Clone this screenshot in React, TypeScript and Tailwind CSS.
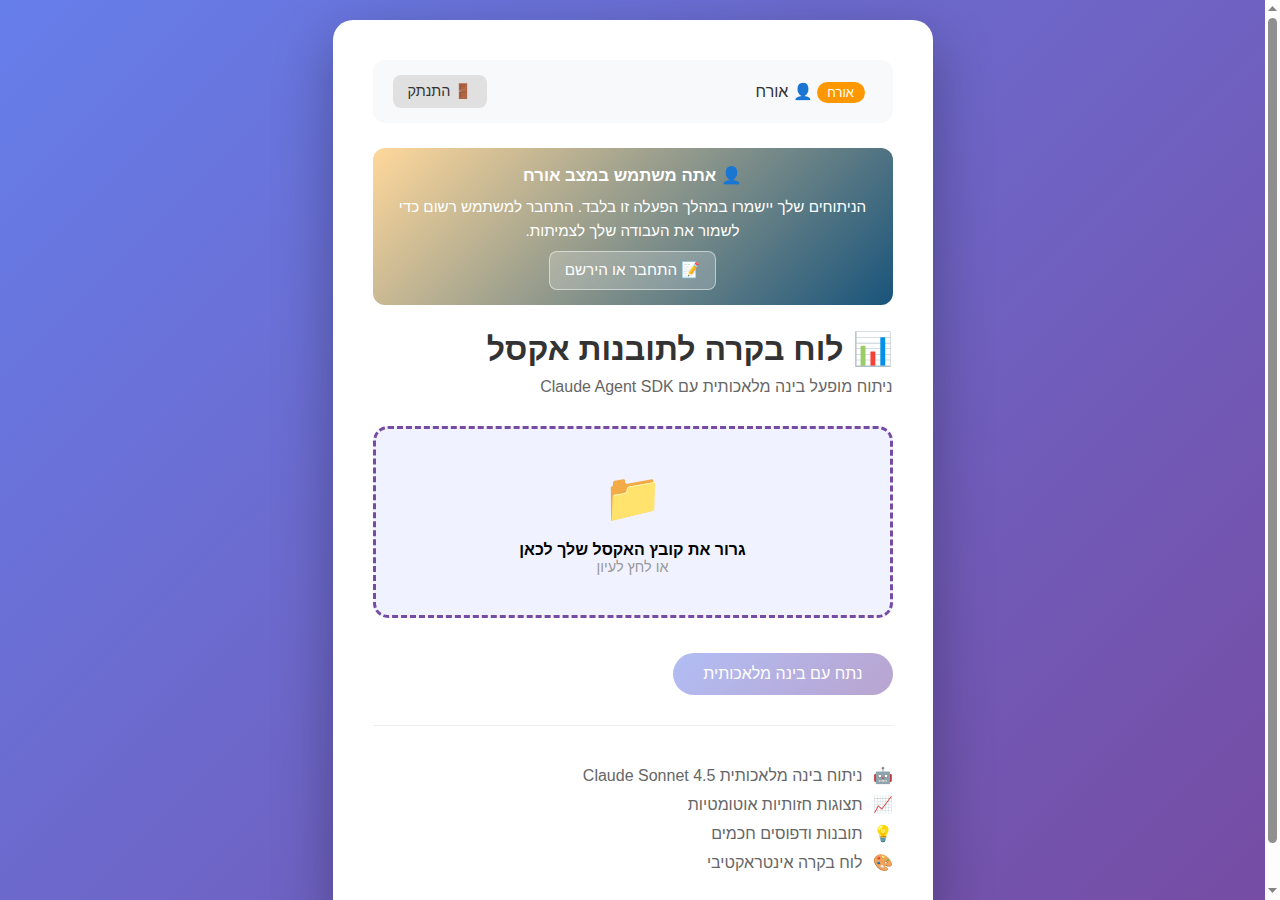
const features = [
  { icon: '🤖', text: 'ניתוח בינה מלאכותית Claude Sonnet 4.5' },
  { icon: '📈', text: 'תצוגות חזותיות אוטומטיות' },
  { icon: '💡', text: 'תובנות ודפוסים חכמים' },
  { icon: '🎨', text: 'לוח בקרה אינטראקטיבי' },
]

function Scrollbar() {
  return (
    <div className="flex h-[900px] w-[15px] shrink-0 flex-col items-center bg-[#fdfdfd] pt-[6px]">
      <svg width="9" height="5" viewBox="0 0 9 5" className="fill-[#858585]">
        <path d="M4.5 0L9 5H0z" />
      </svg>
      <div className="mt-[7px] h-[825px] w-[9px] rounded-[5px] bg-[#8f8f8f]" />
      <svg width="9" height="5" viewBox="0 0 9 5" className="mt-[45px] fill-[#858585]">
        <path d="M0 0H9L4.5 5z" />
      </svg>
    </div>
  )
}

export default function App() {
  return (
    <div className="flex h-[900px] overflow-hidden">
      <div className="min-w-0 flex-1">
        <div
          dir="rtl"
          className="h-[945px] bg-[linear-gradient(135deg,#667eea_0%,#764ba2_100%)] p-5 font-['Liberation_Sans',Arial,sans-serif] text-[#333]"
        >
          <div className="mx-auto w-[600px] rounded-[20px] bg-white p-10 shadow-[0_20px_60px_rgba(0,0,0,0.3)]">
            <div className="mb-[25px] flex items-center justify-between rounded-xl bg-[#f8f9fa] px-5 py-[15px]">
              <div className="flex items-center gap-1">
                <span className="mr-2 mt-[1px] rounded-xl bg-[#ff9800] px-[10.5px] py-[3px] text-[13px] leading-[15px] text-white">
                  אורח
                </span>
                <span className="text-base">👤 אורח</span>
              </div>
              <button className="rounded-lg bg-[#e0e0e0] px-[15px] py-2 text-[14.4px] leading-[17px] text-[#333]">
                🚪 התנתק
              </button>
            </div>

            <div className="mb-[25px] rounded-xl bg-[linear-gradient(135deg,#ffd89b_0%,#19547b_100%)] px-5 pt-4 pb-[15px] text-center text-white">
              <h3 className="mb-[7px] text-[16.8px] font-bold leading-6">👤 אתה משתמש במצב אורח</h3>
              <p className="mb-[7px] text-[15.2px] leading-[24.3px]">
                הניתוחים שלך יישמרו במהלך הפעלה זו בלבד. התחבר למשתמש רשום כדי לשמור את העבודה שלך לצמיתות.
              </p>
              <button className="mx-auto block rounded-lg border border-white/50 bg-white/20 px-[15px] pt-[9px] pb-[11px] text-[15.2px] leading-[17px] text-white">
                📝 התחבר או הירשם
              </button>
            </div>

            <h1 className="mb-[10px] text-[32px] font-bold leading-[38px] text-[#333]">📊 לוח בקרה לתובנות אקסל</h1>
            <p className="mb-[30px] text-base leading-[18px] text-[#666]">ניתוח מופעל בינה מלאכותית עם Claude Agent SDK</p>

            <div className="mb-[35px] h-[192px] rounded-[15px] border-[3px] border-dashed border-[#764ba2] bg-[#f0f2ff] px-5 pt-[41px] text-center">
              <div className="mb-[15px] text-[48px] leading-[56px]">📁</div>
              <p className="text-base font-bold leading-[18px] text-black">גרור את קובץ האקסל שלך לכאן</p>
              <p className="text-[14.4px] leading-4 text-[#999]">או לחץ לעיון</p>
            </div>

            <button className="block rounded-[25px] bg-[linear-gradient(135deg,#667eea_0%,#764ba2_100%)] px-[30px] py-3 text-base leading-[18px] text-white opacity-50">
              נתח עם בינה מלאכותית
            </button>

            <ul className="mt-[30px] border-t border-[#eee] pt-9 pb-2">
              {features.map((f) => (
                <li key={f.icon} className="flex h-[29px] items-center gap-[10px] text-base text-[#666]">
                  <span>{f.icon}</span>
                  <span>{f.text}</span>
                </li>
              ))}
            </ul>
          </div>
        </div>
      </div>
      <Scrollbar />
    </div>
  )
}
